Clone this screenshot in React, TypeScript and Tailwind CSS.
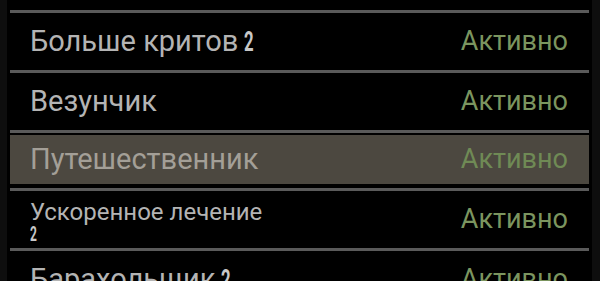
import React from "react";

type Perk = { name: string; rank?: boolean; small?: boolean; selected?: boolean };

const perks: Perk[] = [
  { name: "Больше критов", rank: true },
  { name: "Везунчик" },
  { name: "Путешественник", selected: true },
  { name: "Ускоренное лечение", rank: true, small: true },
  { name: "Барахольщик", rank: true },
];

function Rank({ small }: { small?: boolean }) {
  return (
    <span
      className={
        small
          ? "inline-block w-[10px] origin-left scale-x-[0.6] font-bold text-[20px] leading-[18px] text-[#c8c8c8]"
          : "ml-[6px] inline-block w-[12px] origin-left scale-x-[0.6] font-bold text-[28px] leading-none text-[#c8c8c8]"
      }
    >
      2
    </span>
  );
}

export default function App() {
  return (
    <div
      className="h-[281px] w-[600px] overflow-hidden bg-[#0e0e0e]"
      style={{ fontFamily: "Roboto, 'Noto Sans', sans-serif" }}
    >
      <div className="ml-[7px] h-full w-[585px] bg-black px-[3px] pt-[10px]">
        {perks.map((p) => (
          <div key={p.name}>
            <div className="h-[3px] bg-[#5a5a5a]" />
            {p.selected ? (
              <div className="pt-[2px] pb-[4px]">
                <div className="flex h-[49px] items-center justify-between bg-[#4c4840] pl-[20px] pr-[21px]">
                  <span className="text-[29px] text-[#a39f97]">{p.name}</span>
                  <span className="text-[27px] text-[#6f8a55]">Активно</span>
                </div>
              </div>
            ) : (
              <div className="flex h-[57px] items-center justify-between pl-[20px] pr-[21px]">
                {p.small ? (
                  <div className="flex flex-col pt-[2px] text-[24px] leading-[26px] text-[#b4b4b4]">
                    <span>{p.name}</span>
                    <Rank small />
                  </div>
                ) : (
                  <span className="flex items-baseline text-[29px] text-[#b4b4b4]">
                    {p.name}
                    {p.rank && <Rank />}
                  </span>
                )}
                <span className="text-[27px] text-[#7b955f]">Активно</span>
              </div>
            )}
          </div>
        ))}
      </div>
    </div>
  );
}
